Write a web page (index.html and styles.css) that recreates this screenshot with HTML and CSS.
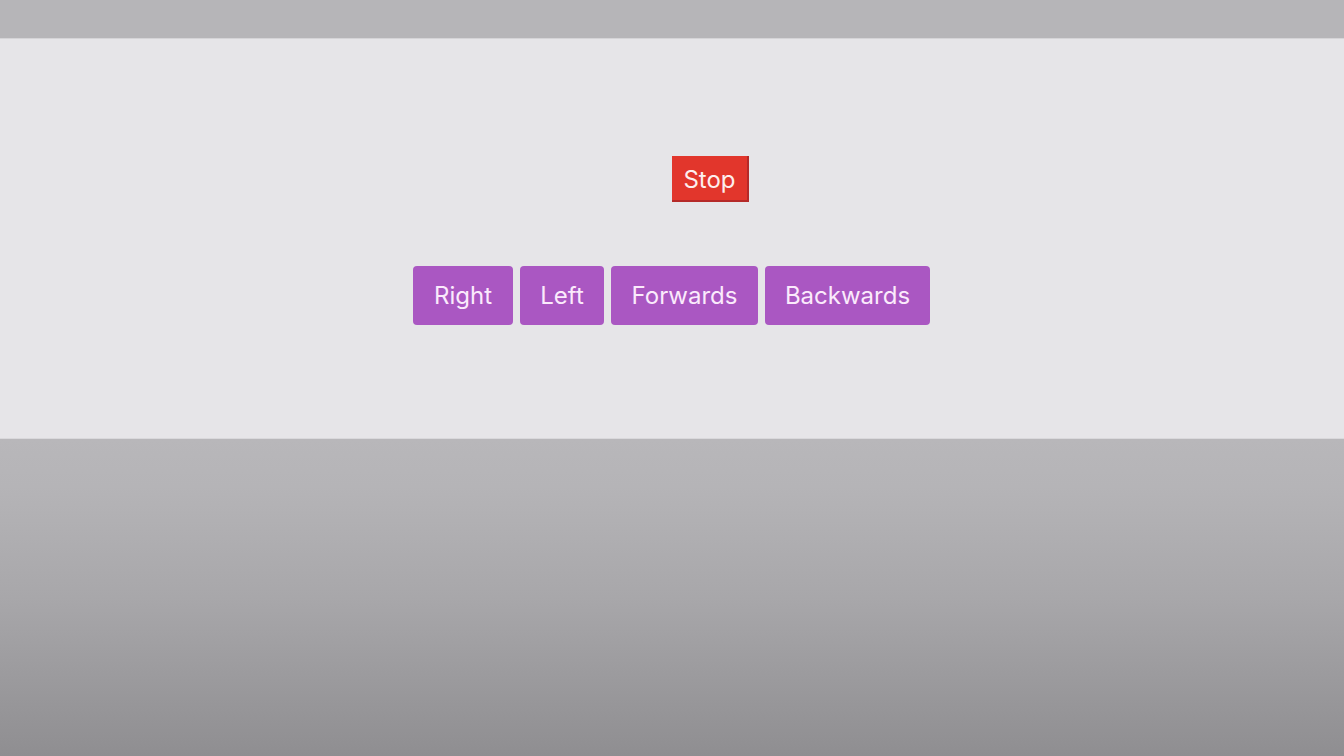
FILE: index.html
```html
<!DOCTYPE html>
<html>
<head>
<meta charset="utf-8">
<link rel="stylesheet" href="styles.css">
</head>
<body>
<div class="topbar"></div>
<main class="panel">
  <div class="stop-row">
    <button class="btn-stop">Stop</button>
  </div>
  <div class="dir-row">
    <button class="btn-dir btn-right">Right</button>
    <button class="btn-dir btn-left">Left</button>
    <button class="btn-dir btn-fwd">Forwards</button>
    <button class="btn-dir btn-back">Backwards</button>
  </div>
</main>
<div class="bottom"></div>
</body>
</html>
```
FILE: styles.css
```css
html, body {
  margin: 0;
  padding: 0;
  height: 756px;
  overflow: hidden;
  font-family: Inter, "Liberation Sans", Arial, sans-serif;
}
body {
  display: flex;
  flex-direction: column;
  background: #b7b6b9;
}
.topbar {
  height: 38px;
  background: #b6b5b8;
  border-bottom: 1px solid #d5d4d7;
}
.panel {
  height: 400px;
  background: #e6e5e8;
  border-bottom: 1px solid #d9d8db;
  box-sizing: border-box;
  padding-top: 117px;
}
.stop-row {
  display: flex;
  justify-content: center;
  padding-left: 77px;
}
.btn-stop {
  width: 77px;
  height: 46px;
  background: #e2362c;
  color: #fdeeee;
  border: none;
  border-right: 2px solid #b52a28;
  border-bottom: 2px solid #b52a28;
  font-family: inherit;
  font-size: 24px;
  padding: 2px 0 0 0;
  box-sizing: border-box;
}
.dir-row {
  display: flex;
  justify-content: center;
  gap: 7px;
  margin-top: 64px;
  padding-right: 1px;
}
.btn-dir {
  height: 59px;
  background: #aa57c2;
  color: #fbeafc;
  border: none;
  border-radius: 4px;
  font-family: inherit;
  font-size: 24px;
  padding: 0;
  box-sizing: border-box;
}
.btn-right { width: 100px; }
.btn-left { width: 84px; }
.btn-fwd { width: 147px; }
.btn-back { width: 165px; }
.bottom {
  flex: 1;
  background: linear-gradient(#b8b7ba 0%, #b5b4b7 15%, #a8a7aa 50%, #8f8e91 100%);
}
```
